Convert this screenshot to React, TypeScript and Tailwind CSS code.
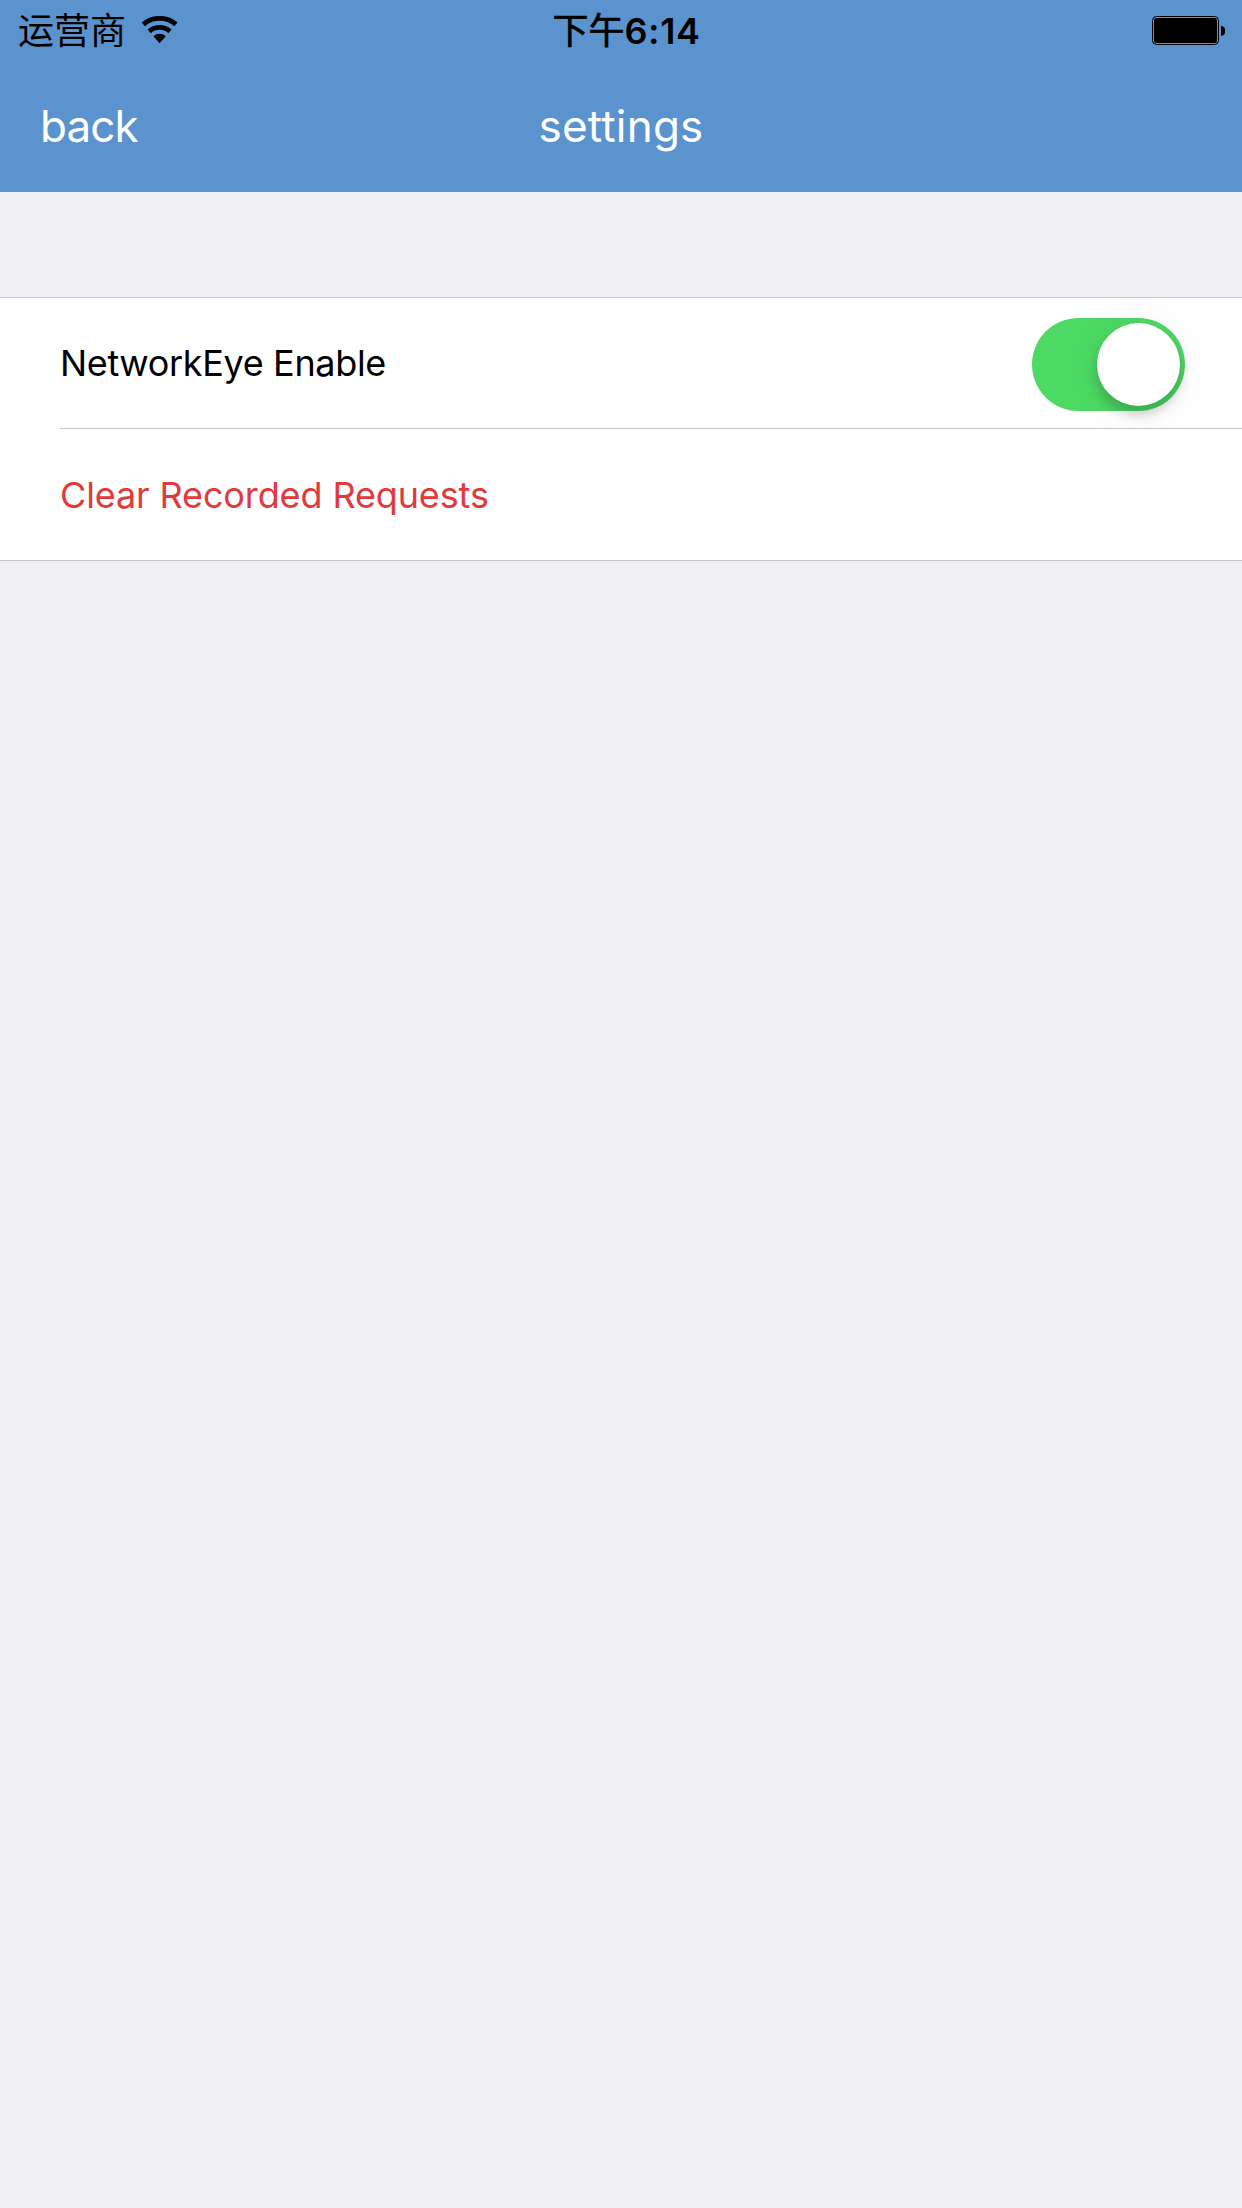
export default function App() {
  return (
    <div className="flex h-[2208px] w-[1242px] flex-col bg-[#efeff4] font-['Inter','Noto_Sans_CJK_SC',sans-serif]">
      <header className="flex h-[192px] flex-col bg-[#5a93ce]">
        <div className="grid h-[62px] grid-cols-3 items-center pl-[18px] pr-[17px] text-[36px] text-black">
          <div className="flex items-center gap-[15px]">
            <span className="leading-[62px]">运营商</span>
            <svg className="-mt-[2px]" width="37" height="28" viewBox="0 0 37 28" fill="none" stroke="black" strokeWidth="4.9">
              <path d="M2.3 8.4A24.85 24.85 0 0 1 34.9 8.4M8.2 15.3A15.8 15.8 0 0 1 29 15.3" />
              <path d="M12.4 20.2A9.3 9.3 0 0 1 24.8 20.2L18.6 27.2z" fill="black" stroke="none" />
            </svg>
          </div>
          <div className="pl-[10px] text-center font-semibold leading-[62px]">
            <span className="font-normal [-webkit-text-stroke:0.7px_black]">下午</span><span className="tracking-[0.6px]">6:14</span>
          </div>
          <svg className="-mt-px justify-self-end" width="73" height="29" viewBox="0 0 73 29">
            <rect x="0.5" y="0.5" width="66" height="28" rx="4" fill="none" stroke="black" />
            <rect x="2" y="2" width="63" height="25" rx="2.5" />
            <path d="M69 10a4.5 5 0 0 1 0 10z" />
          </svg>
        </div>
        <nav className="grid h-[128px] grid-cols-3 items-center px-[40px] text-[44px] text-white">
          <button className="justify-self-start tracking-[-0.9px]">back</button>
          <h1 className="text-center tracking-[0.2px]">settings</h1>
        </nav>
      </header>
      <main className="mt-[105px] border-y border-[#c8c7cc] bg-white text-[36px]">
        <div className="ml-[60px] flex h-[131px] items-center justify-between border-b border-[#c8c7cc] pr-[57px]">
          <span className="tracking-[-0.35px]">NetworkEye Enable</span>
          <button role="switch" aria-checked="true" aria-label="NetworkEye Enable" className="mt-[3px] flex h-[93px] w-[153px] items-center justify-end rounded-full bg-[#4cd964] pr-[5px]">
            <span className="size-[83px] rounded-full bg-white shadow-[0_9px_12px_rgba(0,0,0,0.18),0_3px_40px_rgba(0,0,0,0.07)]" />
          </button>
        </div>
        <div className="flex h-[131px] items-center pl-[60px] text-[#e03a3a]">
          <span className="tracking-[-0.12px]">Clear Recorded Requests</span>
        </div>
      </main>
    </div>
  );
}
